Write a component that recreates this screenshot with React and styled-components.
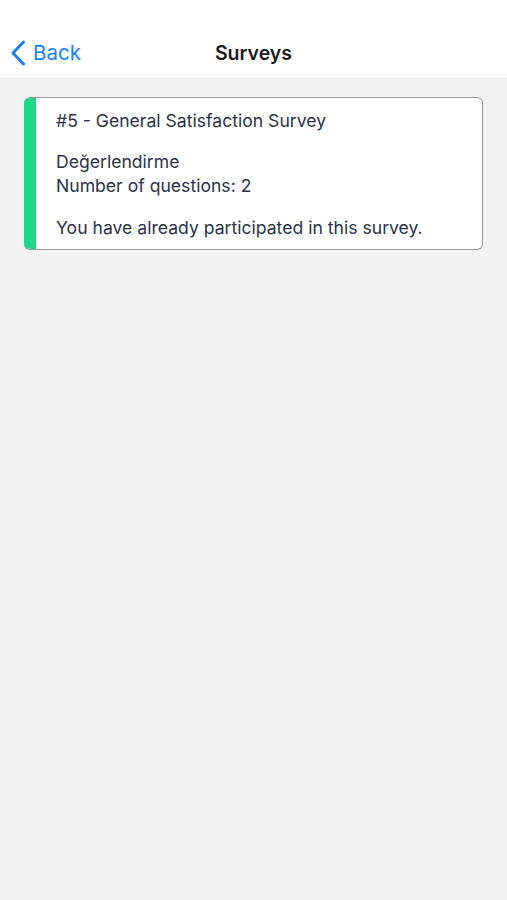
import React from 'react'
import styled, { createGlobalStyle } from 'styled-components'

const Global = createGlobalStyle`
  html, body {
    margin: 0;
    padding: 0;
    background: #f2f2f2;
    font-family: Inter, "Noto Sans", sans-serif;
  }
`

const Page = styled.div`
  min-height: 900px;
  background: #f2f2f2;
`

const Header = styled.div`
  height: 79px;
  background: #ffffff;
  border-bottom: 1px solid #e6e6e6;
  display: grid;
  grid-template-columns: 1fr auto 1fr;
  align-items: center;
  padding-top: 27px;
  box-sizing: border-box;
`

const BackButton = styled.div`
  display: flex;
  align-items: center;
  gap: 7px;
  padding-left: 10px;
  color: #1a82f0;
  font-size: 20.5px;
`

const Title = styled.div`
  font-size: 19.5px;
  font-weight: 600;
  color: #1c1c1e;
`

const List = styled.div`
  padding: 18px 24px;
`

const Card = styled.div`
  display: flex;
  background: #ffffff;
  border: 1px solid #9a9a9a;
  border-left: none;
  border-radius: 6px;
  overflow: hidden;
`

const Stripe = styled.div`
  width: 12px;
  background: ${p => p.color};
  flex-shrink: 0;
`

const Body = styled.div`
  padding: 11px 20px 9px 20px;
  color: #2c3248;
  font-size: 17.6px;
  line-height: 24px;
`

const Block = styled.div`
  margin-top: ${p => p.gap || 0}px;
`

export default function App () {
  return (
    <Page>
      <Global />
      <Header>
        <BackButton>
          <svg width="16" height="26" viewBox="0 0 16 26" fill="none">
            <path d="M13.5 2 L3 13 L13.5 24" stroke="#1a82f0" strokeWidth="3" strokeLinecap="round" strokeLinejoin="round" />
          </svg>
          Back
        </BackButton>
        <Title>Surveys</Title>
        <div />
      </Header>
      <List>
        <Card>
          <Stripe color="#1ed68a" />
          <Body>
            <Block>#5 - General Satisfaction Survey</Block>
            <Block gap={17}>Değerlendirme<br />Number of questions: 2</Block>
            <Block gap={18}>You have already participated in this survey.</Block>
          </Body>
        </Card>
      </List>
    </Page>
  )
}
